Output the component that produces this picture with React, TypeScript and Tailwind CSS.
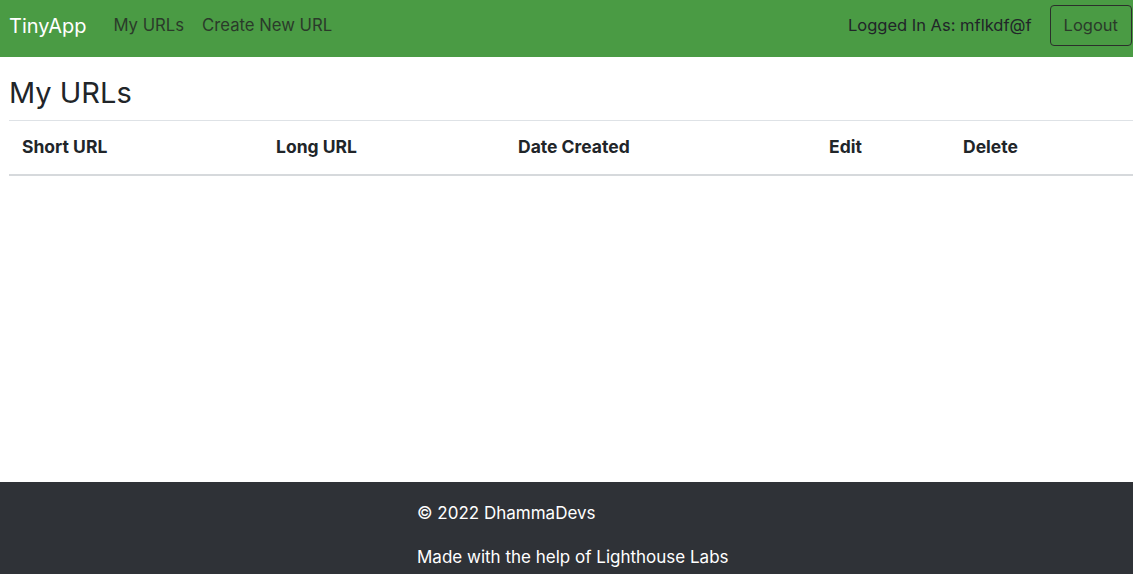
import React from 'react';

const columns = [
  { label: 'Short URL', w: 'w-[254px]' },
  { label: 'Long URL', w: 'w-[242px]' },
  { label: 'Date Created', w: 'w-[311px]' },
  { label: 'Edit', w: 'w-[134px]' },
  { label: 'Delete', w: 'flex-1' },
];

const App = () => {
  return (
    <div className="min-h-screen flex flex-col font-['Inter',sans-serif] text-[#212529]">
      {/* Navbar */}
      <nav className="h-[57px] bg-[#4a9b44] pt-[5px] pl-[9px] pr-px">
        <div className="h-[41px] flex items-center">
          <span className="text-white text-[20px] mr-[27px]">TinyApp</span>
          <a className="text-[#2a3a2a] text-[16.7px] mr-[18px]">My URLs</a>
          <a className="text-[#2a3a2a] text-[16.7px]">Create New URL</a>
          <div className="ml-auto flex items-center">
            <span className="text-[#212529] text-[16.5px] mr-[18px]">Logged In As: mflkdf@f</span>
            <button className="h-[41px] px-[13px] border border-[#2b2f2b] rounded-[4px] text-[#2a3a2a] text-[16.5px]">
              Logout
            </button>
          </div>
        </div>
      </nav>

      {/* Main */}
      <main className="h-[425px] pl-[9px]">
        <h1 className="text-[29px] leading-none pt-[21px] pb-[13px]">My URLs</h1>
        <div className="flex h-[56px] items-center border-t border-[#dee2e6] border-b-2 border-b-[#d6d9dc]">
          {columns.map((c) => (
            <div key={c.label} className={`${c.w} pl-[13px] font-bold text-[17.5px]`}>
              {c.label}
            </div>
          ))}
        </div>
      </main>

      {/* Footer */}
      <footer className="bg-[#2f3237] text-white flex-1 pl-[417px] pt-[19px] pb-[20px]">
        <p className="text-[17px]">© 2022 DhammaDevs</p>
        <p className="text-[17px] mt-[18px]">Made with the help of Lighthouse Labs</p>
      </footer>
    </div>
  );
};

export default App;
